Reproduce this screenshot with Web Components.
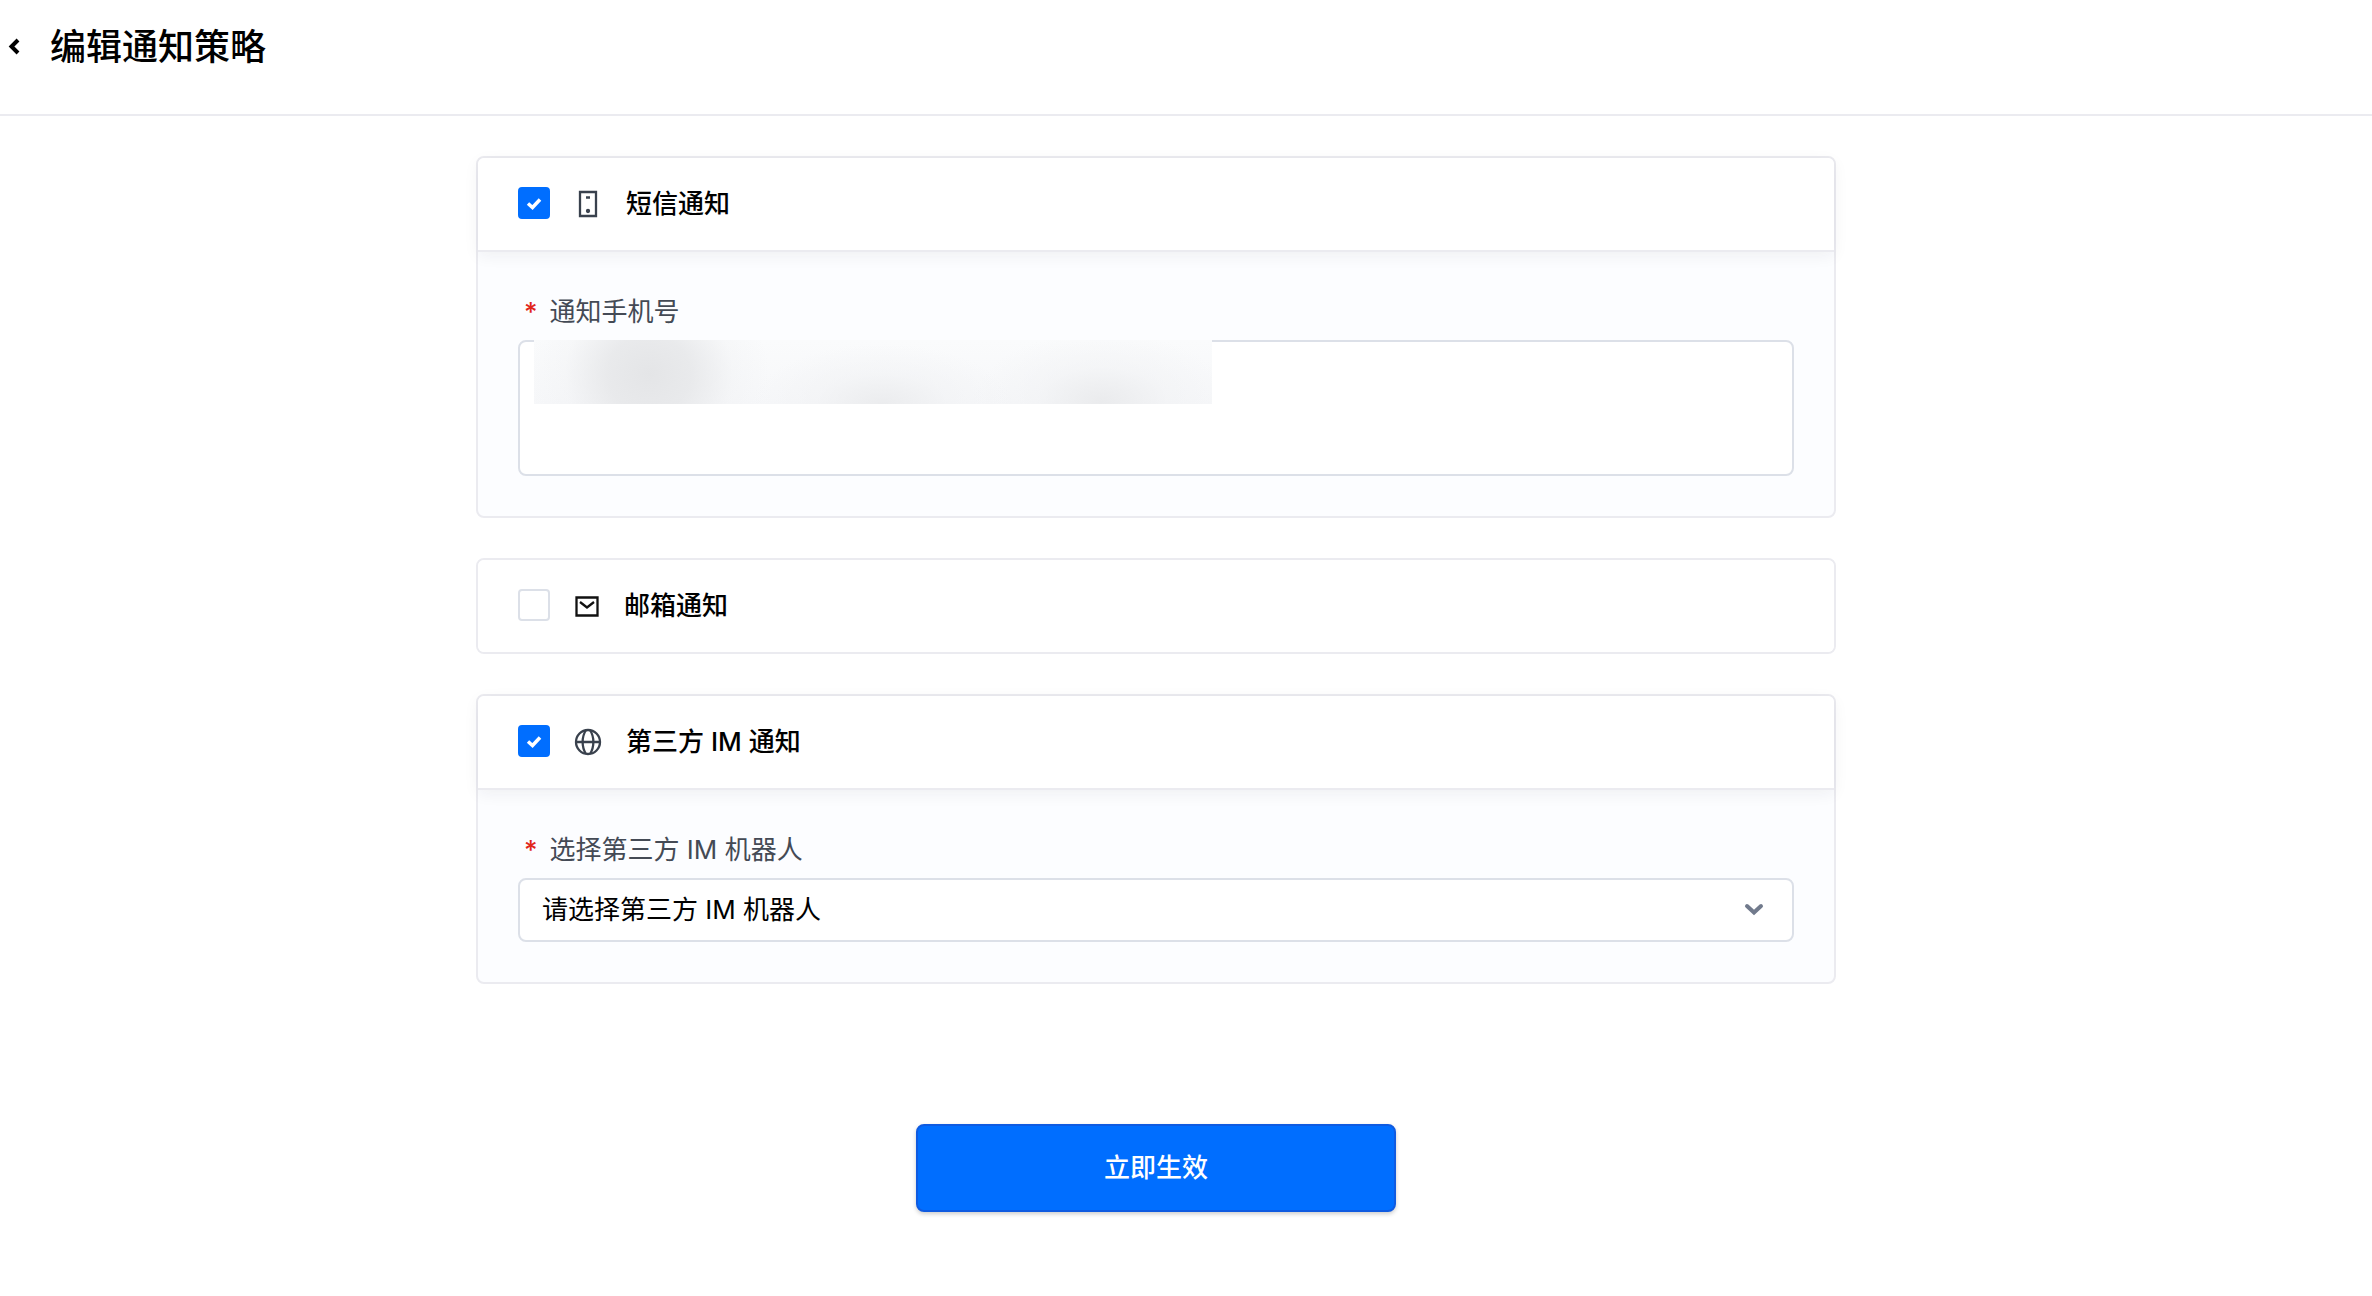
<!DOCTYPE html>
<html lang="zh-CN">
<head>
<meta charset="utf-8">
<meta name="viewport" content="width=device-width, initial-scale=1">
<title>编辑通知策略</title>
<style>
  body {
    margin: 0;
    background: #fff;
    color: #000;
    font-family: Inter, 'Noto Sans CJK SC', sans-serif;
    font-size: 26px;
    line-height: 36px;
  }
</style>
</head>
<body>
<notify-page></notify-page>

<template id="page-header">
  <style>
    :host {
      display: flex;
      align-items: center;
      gap: 24px;
      box-sizing: border-box;
      height: 116px;
      padding: 0 0 20px 2px;
      border-bottom: 2px solid #ebebf0;
    }
    a {
      display: flex;
      align-items: center;
      height: 52px;
      color: #000;
    }
    h1 {
      margin: 0;
      font-size: 36px;
      font-weight: 500;
      line-height: 52px;
    }
  </style>
  <a href="#" aria-label="返回">
    <svg width="24" height="24" viewBox="0 0 24 24" fill="none" stroke="currentColor" stroke-width="4">
      <path d="M16 5 9.500 11.500 16 18"/>
    </svg>
  </a>
  <h1><slot></slot></h1>
</template>

<template id="notify-card">
  <style>
    :host {
      display: block;
      box-sizing: border-box;
      border: 2px solid #ebebf0;
      border-radius: 8px;
      background: #fcfdff;
    }
    .head {
      display: flex;
      align-items: center;
      gap: 24px;
      box-sizing: border-box;
      height: 92px;
      padding: 0 40px;
      border-radius: 6px;
      background: #fff;
    }
    :host([open]) .head {
      height: 94px;
      border-bottom: 2px solid #ebebf0;
      border-radius: 6px 6px 0 0;
      box-shadow: 0 4px 16px rgba(30, 35, 50, 0.06);
    }
    .check {
      display: grid;
      padding-bottom: 2px;
    }
    .check > * {
      grid-area: 1 / 1;
    }
    input {
      appearance: none;
      box-sizing: border-box;
      width: 32px;
      height: 32px;
      margin: 0;
      border: 2px solid #dce0e8;
      border-radius: 4px;
      background: #fff;
    }
    input:checked {
      border-color: #006eff;
      background: #006eff;
    }
    .check svg {
      pointer-events: none;
      visibility: hidden;
    }
    input:checked + svg {
      visibility: visible;
    }
    label {
      font-weight: 500;
    }
    .body {
      padding: 40px;
    }
    :host(:not([open])) .body {
      display: none;
    }
    ::slotted(svg) {
      display: block;
    }
  </style>
  <div class="head">
    <span class="check">
      <input type="checkbox" id="toggle">
      <svg width="32" height="32" viewBox="0 0 32 32" fill="none" stroke="#fff" stroke-width="3.500">
        <path d="M10 16.500 14.500 20.500 22 12.500"/>
      </svg>
    </span>
    <slot name="icon"></slot>
    <label for="toggle"></label>
  </div>
  <div class="body"><slot></slot></div>
</template>

<template id="phone-field">
  <style>
    :host { display: block; }
    label {
      display: flex;
      gap: 12px;
      padding: 2px 0 10px 6px;
      color: #444a55;
    }
    .star {
      color: #e1251b;
      font-weight: 500;
    }
    .box {
      position: relative;
      display: grid;
    }
    textarea {
      box-sizing: border-box;
      width: 100%;
      height: 136px;
      padding: 12px 22px;
      border: 2px solid #dce0e8;
      border-radius: 8px;
      background: #fff;
      font: inherit;
      resize: none;
      outline: none;
    }
    /* hides the numbers */
    .mask {
      position: absolute;
      top: 0;
      left: 16px;
      width: 678px;
      height: 64px;
      background:
        radial-gradient(ellipse 120px 110px at 115px 34px, #e4e5e7, rgba(229, 230, 232, 0.8) 35%, rgba(238, 239, 241, 0.3) 70%, rgba(245, 246, 248, 0)),
        radial-gradient(ellipse 130px 60px at 348px 64px, #ebecee, rgba(240, 241, 243, 0.5) 50%, rgba(245, 246, 248, 0)),
        radial-gradient(ellipse 130px 70px at 568px 62px, #eaebed, rgba(240, 241, 243, 0.5) 50%, rgba(245, 246, 248, 0)),
        linear-gradient(#fafbfc, #f6f7f9);
      pointer-events: none;
    }
  </style>
  <label for="field"><span class="star">*</span><slot></slot></label>
  <div class="box">
    <textarea id="field"></textarea>
    <div class="mask"></div>
  </div>
</template>

<template id="robot-select">
  <style>
    :host { display: block; }
    label {
      display: flex;
      gap: 12px;
      padding: 2px 0 10px 6px;
      color: #444a55;
    }
    .star {
      color: #e1251b;
      font-weight: 500;
    }
    .box {
      display: grid;
      align-items: center;
    }
    .box > * {
      grid-area: 1 / 1;
    }
    select {
      appearance: none;
      box-sizing: border-box;
      width: 100%;
      height: 64px;
      padding: 0 64px 0 22px;
      border: 2px solid #dce0e8;
      border-radius: 8px;
      background: #fff;
      color: #000;
      font: inherit;
      outline: none;
    }
    svg {
      justify-self: end;
      margin-right: 28px;
      pointer-events: none;
    }
  </style>
  <label for="field"><span class="star">*</span><slot></slot></label>
  <div class="box">
    <select id="field"></select>
    <svg width="24" height="24" viewBox="0 0 24 24" fill="none" stroke="#717a8c" stroke-width="4" stroke-linecap="round">
      <path d="M5 8 12 14.500 19 8"/>
    </svg>
  </div>
</template>

<template id="submit-button">
  <style>
    :host {
      display: block;
      width: 480px;
      max-width: 100%;
    }
    button {
      width: 100%;
      height: 88px;
      border: 2px solid #0f5be1;
      border-radius: 8px;
      background: #006eff;
      box-shadow: 0 2px 4px rgba(0, 0, 0, 0.2);
      color: #fff;
      font: inherit;
      font-weight: 500;
    }
  </style>
  <button type="button"><slot></slot></button>
</template>

<template id="notify-page">
  <style>
    :host { display: block; }
    main {
      display: flex;
      flex-direction: column;
      align-items: center;
      padding: 40px 60px 84px 0;
    }
    .cards {
      display: grid;
      gap: 40px;
      width: 100%;
      max-width: 1360px;
    }
    submit-button { margin-top: 140px; }
  </style>
  <page-header>编辑通知策略</page-header>
  <main>
    <div class="cards">
      <notify-card heading="短信通知" open>
        <svg slot="icon" width="28" height="28" viewBox="0 0 28 28" fill="none" stroke="#39414d" stroke-width="2.300">
          <path d="M6 2H22V26H6zM12 7.500H16"/>
          <circle cx="14" cy="21" r="1"/>
        </svg>
        <phone-field>通知手机号</phone-field>
      </notify-card>
      <notify-card heading="邮箱通知">
        <svg slot="icon" width="26" height="28" viewBox="0 0 26 28" fill="none" stroke="#111" stroke-width="2.300">
          <path d="M2.500 5.500H23.500V23.500H2.500zM6 10 13 15.500 20 10"/>
        </svg>
      </notify-card>
      <notify-card heading="第三方 IM 通知" open>
        <svg slot="icon" width="28" height="28" viewBox="0 0 28 28" fill="none" stroke="#39414d" stroke-width="2.300">
          <circle cx="14" cy="14" r="12"/>
          <path d="M2 14H26M12 2C7.500 9 7.500 19 12 26M16 2C20.500 9 20.500 19 16 26"/>
        </svg>
        <robot-select placeholder="请选择第三方 IM 机器人">选择第三方 IM 机器人</robot-select>
      </notify-card>
    </div>
    <submit-button>立即生效</submit-button>
  </main>
</template>

<script>
class BaseElement extends HTMLElement {
  constructor() {
    super();
    this._shadowRoot = this.attachShadow({ mode: 'open' });
    const template = document.getElementById(this.localName);
    this._shadowRoot.appendChild(template.content.cloneNode(true));
  }
}

class PageHeader extends BaseElement {}
class PhoneField extends BaseElement {}
class SubmitButton extends BaseElement {}
class NotifyPage extends BaseElement {}

class NotifyCard extends BaseElement {
  connectedCallback() {
    this.$toggle = this._shadowRoot.querySelector('input');
    this.$label = this._shadowRoot.querySelector('label');
    this.$label.textContent = this.getAttribute('heading');
    this.$toggle.checked = this.hasAttribute('open');
    this.$toggle.addEventListener('change', () => {
      this.toggleAttribute('open', this.$toggle.checked);
    });
  }
}

class RobotSelect extends BaseElement {
  connectedCallback() {
    this.$select = this._shadowRoot.querySelector('select');
    this.$select.add(new Option(this.getAttribute('placeholder'), ''));
  }
}

window.customElements.define('page-header', PageHeader);
window.customElements.define('notify-card', NotifyCard);
window.customElements.define('phone-field', PhoneField);
window.customElements.define('robot-select', RobotSelect);
window.customElements.define('submit-button', SubmitButton);
window.customElements.define('notify-page', NotifyPage);
</script>
</body>
</html>
